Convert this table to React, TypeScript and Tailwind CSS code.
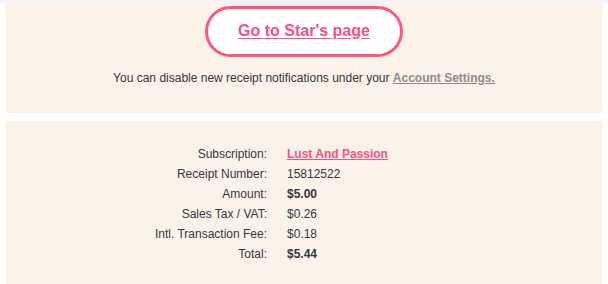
const rows: { label: string; value: string; kind?: 'link' | 'bold' }[] = [
  { label: 'Subscription:', value: 'Lust And Passion', kind: 'link' },
  { label: 'Receipt Number:', value: '15812522' },
  { label: 'Amount:', value: '$5.00', kind: 'bold' },
  { label: 'Sales Tax / VAT:', value: '$0.26' },
  { label: 'Intl. Transaction Fee:', value: '$0.18' },
  { label: 'Total:', value: '$5.44', kind: 'bold' },
]

export default function App() {
  return (
    <div className="h-[284px] w-[608px] overflow-hidden bg-white font-['Liberation_Sans',Arial,sans-serif] text-[12px] text-[#36363f]">
      <div className="h-[3px] bg-[#f4f3f6]" />
      <div className="mx-[5px] flex h-[110px] flex-col items-center bg-[#fbf3ea] pt-[3px]">
        <a
          className="flex h-[51px] w-[198px] items-center justify-center rounded-full border-[3px] border-[#fb5880] bg-white pb-[2px] text-[16px] font-bold text-[#f5527f] underline underline-offset-2"
          href="#"
        >
          Go to Star's page
        </a>
        <p className="mt-[12px]">
          You can disable new receipt notifications under your{' '}
          <a className="font-bold text-[#8e8c89] underline" href="#">
            Account Settings.
          </a>
        </p>
      </div>
      <div className="mx-[5px] mt-[8px] h-[163px] bg-[#fbf3ea] pt-[23px]">
        <div className="grid grid-cols-[262px_1fr] gap-x-[20px]">
          {rows.map((row) => (
            <div key={row.label} className="contents">
              <div className="h-[20px] text-right leading-[20px]">{row.label}</div>
              <div className="h-[20px] leading-[20px]">
                {row.kind === 'link' ? (
                  <a className="font-bold text-[#f5527f] underline" href="#">
                    {row.value}
                  </a>
                ) : (
                  <span className={row.kind === 'bold' ? 'font-bold' : ''}>{row.value}</span>
                )}
              </div>
            </div>
          ))}
        </div>
      </div>
    </div>
  )
}
